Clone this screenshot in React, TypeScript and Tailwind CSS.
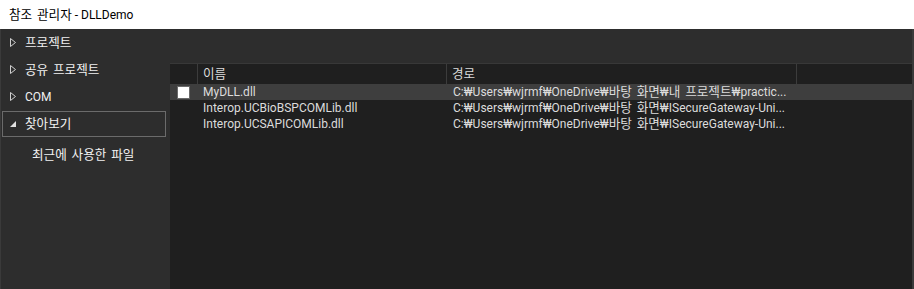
import React from "react";

const font = { fontFamily: 'Roboto, "Noto Sans CJK KR", sans-serif' };

function K({ children }: { children: string }) {
  const parts = children.split(/([\uAC00-\uD7A3]+(?: [\uAC00-\uD7A3]+)*)/g);
  return (
    <span className="whitespace-pre leading-[16px]">
      {parts.map((p, i) =>
        /[\uAC00-\uD7A3]/.test(p) ? (
          <span key={i} className="text-[12.6px] leading-[0] [word-spacing:2px]" style={{ fontFamily: '"Noto Sans CJK KR", sans-serif' }}>
            {p}
          </span>
        ) : (
          <span key={i} className="leading-[0]">{p}</span>
        )
      )}
    </span>
  );
}

function HollowTri() {
  return (
    <svg width="6" height="9" viewBox="0 0 6 9" className="shrink-0">
      <path d="M0.5 0.5 L5.5 4.5 L0.5 8.5 Z" fill="none" stroke="#d0d0d0" strokeWidth="1" />
    </svg>
  );
}

function FilledTri() {
  return (
    <svg width="6" height="6" viewBox="0 0 6 6" className="shrink-0">
      <path d="M6 0 L6 6 L0 6 Z" fill="#e0e0e0" />
    </svg>
  );
}

const rows = [
  { name: "MyDLL.dll", path: "C:₩Users₩wjrmf₩OneDrive₩바탕 화면₩내 프로젝트₩practic...", sel: true },
  { name: "Interop.UCBioBSPCOMLib.dll", path: "C:₩Users₩wjrmf₩OneDrive₩바탕 화면₩ISecureGateway-Uni...", sel: false },
  { name: "Interop.UCSAPICOMLib.dll", path: "C:₩Users₩wjrmf₩OneDrive₩바탕 화면₩ISecureGateway-Uni...", sel: false },
];

export default function App() {
  return (
    <div className="w-[914px] h-[289px] flex flex-col overflow-hidden text-[12px]" style={font}>
      <div className="h-[29px] bg-white flex items-center pl-[9px] text-[12px] text-black"><K>참조 관리자 - DLLDemo</K></div>
      <div className="flex-1 flex bg-[#2d2d2d] border-l border-r-2 border-[#3a3a3a]">
        <div className="w-[169px] flex flex-col text-[#f1f1f1]">
          <div className="h-[27px] flex items-center pl-[9px] gap-[9px]"><HollowTri /><K>프로젝트</K></div>
          <div className="h-[27px] flex items-center pl-[9px] gap-[9px]"><HollowTri /><K>공유 프로젝트</K></div>
          <div className="h-[27px] flex items-center pl-[9px] gap-[9px]"><HollowTri /><span>COM</span></div>
          <div className="h-[26px] mt-[1px] ml-[1px] mr-[4px] border border-[#6b6b6b] flex items-center pl-[7px] gap-[9px]"><FilledTri /><K>찾아보기</K></div>
          <div className="h-[27px] mt-[4px] flex items-center pl-[31px]"><K>최근에 사용한 파일</K></div>
        </div>
        <div className="flex-1 flex flex-col">
          <div className="h-[34px]" />
          <div className="flex-1 bg-[#1f1f1f] border-t border-[#383838] text-[#dcdcdc]">
            <div className="h-[20px] flex items-stretch">
              <div className="w-[28px] border-r border-[#3c3c3c]" />
              <div className="w-[249px] border-r border-[#3c3c3c] flex items-center pl-[5px]"><K>이름</K></div>
              <div className="w-[350px] border-r border-[#3c3c3c] flex items-center pl-[5px]"><K>경로</K></div>
              <div className="flex-1" />
            </div>
            {rows.map((r) => (
              <div key={r.name} className={`h-[16px] flex items-center ${r.sel ? "bg-[#3e3e3e]" : ""}`}>
                <div className="w-[28px] flex items-center pl-[7px]">
                  {r.sel && <div className="w-[13px] h-[13px] bg-white border border-[#6a6a6a]" />}
                </div>
                <div className="w-[250px] pl-[5px] whitespace-nowrap leading-[16px]">{r.name}</div>
                <div className="w-[350px] pl-[5px] whitespace-nowrap leading-[16px]"><K>{r.path}</K></div>
              </div>
            ))}
          </div>
        </div>
      </div>
    </div>
  );
}
